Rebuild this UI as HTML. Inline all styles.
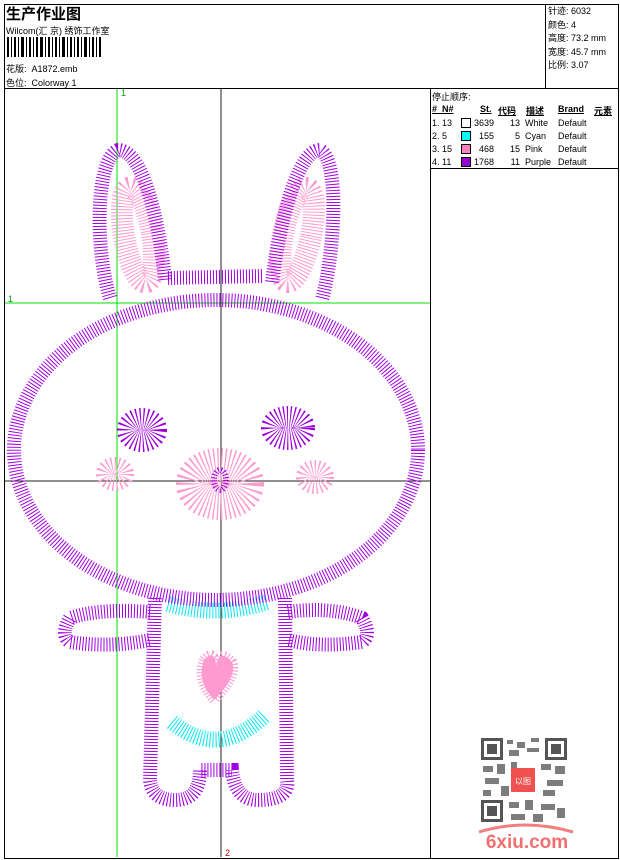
<!DOCTYPE html>
<html><head><meta charset="utf-8"><style>
body{margin:0;width:620px;height:860px;background:#fff;font-family:"Liberation Sans","Noto Sans CJK SC",sans-serif;position:relative;overflow:hidden;color:#000}
.a{position:absolute;white-space:nowrap}
.f{font-size:9px}
</style></head><body>
<div class="a" style="left:4px;top:4px;width:613px;height:853px;border:1px solid #000"></div>
<div class="a" style="left:4px;top:88px;width:614px;border-top:1px solid #000"></div>
<div class="a" style="left:545px;top:4px;height:84px;border-left:1px solid #000"></div>
<div class="a" style="left:430px;top:88px;height:770px;border-left:1px solid #000"></div>
<div class="a" style="left:430px;top:168px;width:188px;border-top:1px solid #000"></div>
<div class="a" style="left:6px;top:3px;font-size:15px;font-weight:bold">生产作业图</div>
<div class="a f" style="left:6px;top:24px">Wilcom(汇 京) 绣饰工作室</div>
<svg class="a" style="left:7px;top:37px" width="96" height="20">
<g fill="#000">
<rect x="0" width="2" height="20"/><rect x="4" width="1" height="20"/><rect x="7" width="2" height="20"/><rect x="11" width="1" height="20"/><rect x="14" width="3" height="20"/><rect x="19" width="1" height="20"/><rect x="22" width="2" height="20"/><rect x="26" width="1" height="20"/><rect x="29" width="2" height="20"/><rect x="33" width="3" height="20"/><rect x="38" width="1" height="20"/><rect x="41" width="2" height="20"/><rect x="45" width="1" height="20"/><rect x="48" width="2" height="20"/><rect x="52" width="1" height="20"/><rect x="55" width="3" height="20"/><rect x="60" width="1" height="20"/><rect x="63" width="2" height="20"/><rect x="67" width="1" height="20"/><rect x="70" width="2" height="20"/><rect x="74" width="1" height="20"/><rect x="77" width="3" height="20"/><rect x="82" width="1" height="20"/><rect x="85" width="2" height="20"/><rect x="89" width="1" height="20"/><rect x="92" width="2" height="20"/>
</g></svg>
<div class="a f" style="left:6px;top:62px">花版:&nbsp; A1872.emb</div>
<div class="a f" style="left:6px;top:76px">色位:&nbsp; Colorway 1</div>
<div class="a f" style="left:548px;top:5px;line-height:13.5px">针迹: 6032<br>颜色: 4<br>高度: 73.2 mm<br>宽度: 45.7 mm<br>比例: 3.07</div>
<div class="a f" style="left:432px;top:90px">停止顺序:</div>
<div class="a f" style="left:432px;top:104px;font-weight:bold;text-decoration:underline">#&nbsp; N#</div>
<div class="a f" style="left:480px;top:104px;font-weight:bold;text-decoration:underline">St.</div>
<div class="a f" style="left:498px;top:104px;font-weight:bold;text-decoration:underline">代码</div>
<div class="a f" style="left:526px;top:104px;font-weight:bold;text-decoration:underline">描述</div>
<div class="a f" style="left:558px;top:104px;font-weight:bold;text-decoration:underline">Brand</div>
<div class="a f" style="left:594px;top:104px;font-weight:bold;text-decoration:underline">元素</div>
<div class="a f" style="left:432px;top:117px;line-height:13px">1. 13<br>2. 5<br>3. 15<br>4. 11</div>
<div class="a" style="left:461px;top:118px;width:8px;height:8px;border:1px solid #000;background:#fff"></div>
<div class="a" style="left:461px;top:131px;width:8px;height:8px;border:1px solid #000;background:#00ffff"></div>
<div class="a" style="left:461px;top:144px;width:8px;height:8px;border:1px solid #000;background:#ff80c0"></div>
<div class="a" style="left:461px;top:157px;width:8px;height:8px;border:1px solid #000;background:#9400d3"></div>
<div class="a f" style="left:472px;top:117px;line-height:13px;width:22px;text-align:right">3639<br>155<br>468<br>1768</div>
<div class="a f" style="left:500px;top:117px;line-height:13px;width:20px;text-align:right">13<br>5<br>15<br>11</div>
<div class="a f" style="left:525px;top:117px;line-height:13px">White<br>Cyan<br>Pink<br>Purple</div>
<div class="a f" style="left:558px;top:117px;line-height:13px">Default<br>Default<br>Default<br>Default</div>

<svg class="a" style="left:0;top:0" width="430" height="860">
<line x1="117" y1="89" x2="117" y2="857" stroke="#00e000"/>
<line x1="5" y1="303" x2="430" y2="303" stroke="#00e000"/>
<line x1="221" y1="89" x2="221" y2="857" stroke="#222"/>
<line x1="5" y1="481" x2="430" y2="481" stroke="#222"/>
<text x="121" y="96" font-size="9" fill="#00a000" font-family="Liberation Sans">1</text>
<text x="8" y="302" font-size="9" fill="#00a000" font-family="Liberation Sans">1</text>
<text x="225" y="856" font-size="9" fill="#c00000" font-family="Liberation Sans">2</text>
<g fill="none" stroke="#ff9ad0" stroke-width="22" stroke-dasharray="1 2">
<ellipse cx="138" cy="235" rx="14" ry="48" transform="rotate(-10 138 235)"/>
<ellipse cx="297" cy="235" rx="14" ry="48" transform="rotate(12 297 235)"/>
<ellipse cx="220" cy="484" rx="24" ry="16" stroke-width="40"/>
<ellipse cx="115" cy="474" rx="10" ry="8" stroke-width="18"/>
<ellipse cx="315" cy="477" rx="10" ry="8" stroke-width="18"/>
<path d="M204 660 q10 -12 12 6 q4 -18 16 -4 q6 14 -18 38 q-18 -20 -10 -40z" fill="#ff9ad0" stroke-width="10"/>
</g>
<g fill="none" stroke="#9b00d8" stroke-dasharray="1 2">
<ellipse cx="142" cy="430" rx="14" ry="11" stroke-width="22"/>
<ellipse cx="288" cy="428" rx="16" ry="11" stroke-width="22"/>
</g>
<g fill="none" stroke="#00e8f0" stroke-width="16" stroke-dasharray="1 2">
<path d="M168 604 Q218 618 268 602"/>
<path d="M172 722 Q218 760 264 716"/>
</g>
<g fill="none" stroke="#a000e0" stroke-width="14" stroke-dasharray="1 2">
<path d="M110 298 C95 250 95 160 118 150 C145 150 160 230 165 280"/>
<path d="M272 282 C280 220 298 150 320 150 C340 160 335 250 322 300"/>
<path d="M168 278 L262 276"/>
<ellipse cx="216" cy="450" rx="202" ry="150"/>
<path d="M155 598 L150 780 Q152 800 175 800 Q200 800 200 770 L232 770 Q235 800 258 800 Q290 800 287 780 L285 598"/>
<path d="M150 612 Q100 608 70 618 Q60 635 70 642 Q110 648 150 640"/>
<path d="M288 612 Q330 606 362 618 Q372 635 362 642 Q320 648 288 640"/>
<ellipse cx="220" cy="480" rx="6" ry="10" stroke-width="6"/>
</g>
</svg>
<svg class="a" style="left:481px;top:738px" width="86" height="84">
<rect x="0" y="0" width="86" height="84" fill="#fff"/>
<g fill="#555">
<rect x="0" y="0" width="22" height="22"/><rect x="64" y="0" width="22" height="22"/><rect x="0" y="62" width="22" height="22"/>
</g>
<g fill="#fff"><rect x="3" y="3" width="16" height="16"/><rect x="67" y="3" width="16" height="16"/><rect x="3" y="65" width="16" height="16"/></g>
<g fill="#555"><rect x="6" y="6" width="10" height="10"/><rect x="70" y="6" width="10" height="10"/><rect x="6" y="68" width="10" height="10"/></g>
<g fill="#666" opacity="0.85">
<rect x="26" y="2" width="6" height="4"/><rect x="36" y="4" width="8" height="6"/><rect x="50" y="0" width="8" height="4"/><rect x="28" y="12" width="10" height="6"/><rect x="46" y="10" width="12" height="4"/>
<rect x="2" y="28" width="10" height="6"/><rect x="16" y="26" width="8" height="10"/><rect x="30" y="24" width="6" height="6"/><rect x="60" y="26" width="10" height="6"/><rect x="74" y="28" width="10" height="8"/>
<rect x="4" y="40" width="14" height="6"/><rect x="66" y="42" width="16" height="6"/><rect x="2" y="52" width="8" height="6"/><rect x="20" y="48" width="8" height="10"/><rect x="62" y="52" width="12" height="6"/>
<rect x="28" y="64" width="10" height="6"/><rect x="44" y="62" width="8" height="10"/><rect x="60" y="66" width="14" height="6"/><rect x="76" y="70" width="8" height="10"/><rect x="30" y="76" width="14" height="6"/><rect x="52" y="76" width="10" height="8"/>
</g>
<rect x="30" y="30" width="24" height="24" fill="#f05050"/>
<text x="42" y="46" font-size="8" fill="#fff" text-anchor="middle" font-family="Noto Sans CJK SC">以图</text>
</svg>
<svg class="a" style="left:475px;top:822px" width="104" height="30">
<path d="M4 10 Q50 -4 98 10" fill="none" stroke="#f08080" stroke-width="3"/>
<text x="52" y="26" text-anchor="middle" font-size="19" font-weight="bold" fill="#f07070" font-family="Liberation Sans">6xiu.com</text>
</svg>
</body></html>
